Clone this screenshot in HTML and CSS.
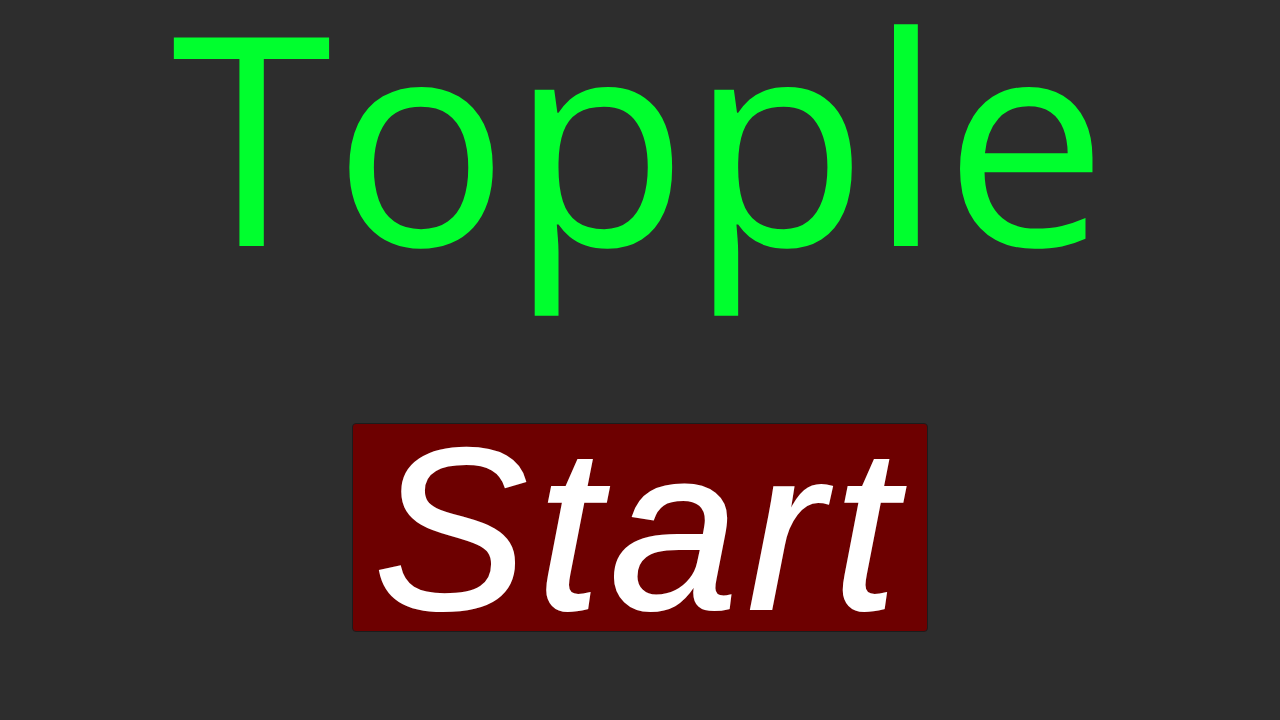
FILE: index.html
```html
<!DOCTYPE html>
<html lang="en">
  <head>
    <meta charset="UTF-8" />
    <meta name="viewport" content="width=device-width, initial-scale=1.0" />
    <title>Topple</title>
    <link rel="stylesheet" href="styles.css">
  </head>
  <body>
    <div class="menu">
      <h1 class="title">Topple</h1>
      <button class="start-btn" type="button">Start</button>
    </div>
  </body>
</html>
```

FILE: styles.css
```css
body {
  margin: 0;
  background-color: #2d2d2d; /* fundo cinza escuro */
  font-family: "Open Sans", sans-serif;
}
.menu {
  display: flex;
  flex-direction: column;
  align-items: center;
}
.title {
  margin: 8px 0 0 0;
  font-size: 292px;
  font-weight: 400;
  line-height: 250px;
  letter-spacing: 1px;
  color: #00ff2e;
}
.start-btn {
  box-sizing: border-box;
  width: 576px;
  height: 209px;
  margin-top: 165px;
  padding: 30px 0 27px 0;
  background-color: #6d0000;
  border: 1px solid #1c1c1c;
  border-radius: 4px;
  color: #fff;
  font-family: "Liberation Sans", Arial, sans-serif;
  font-style: italic;
  font-size: 231px;
  line-height: 150px;
  letter-spacing: 9px;
  -webkit-text-stroke: 2px #fff;
  cursor: pointer;
}
```
